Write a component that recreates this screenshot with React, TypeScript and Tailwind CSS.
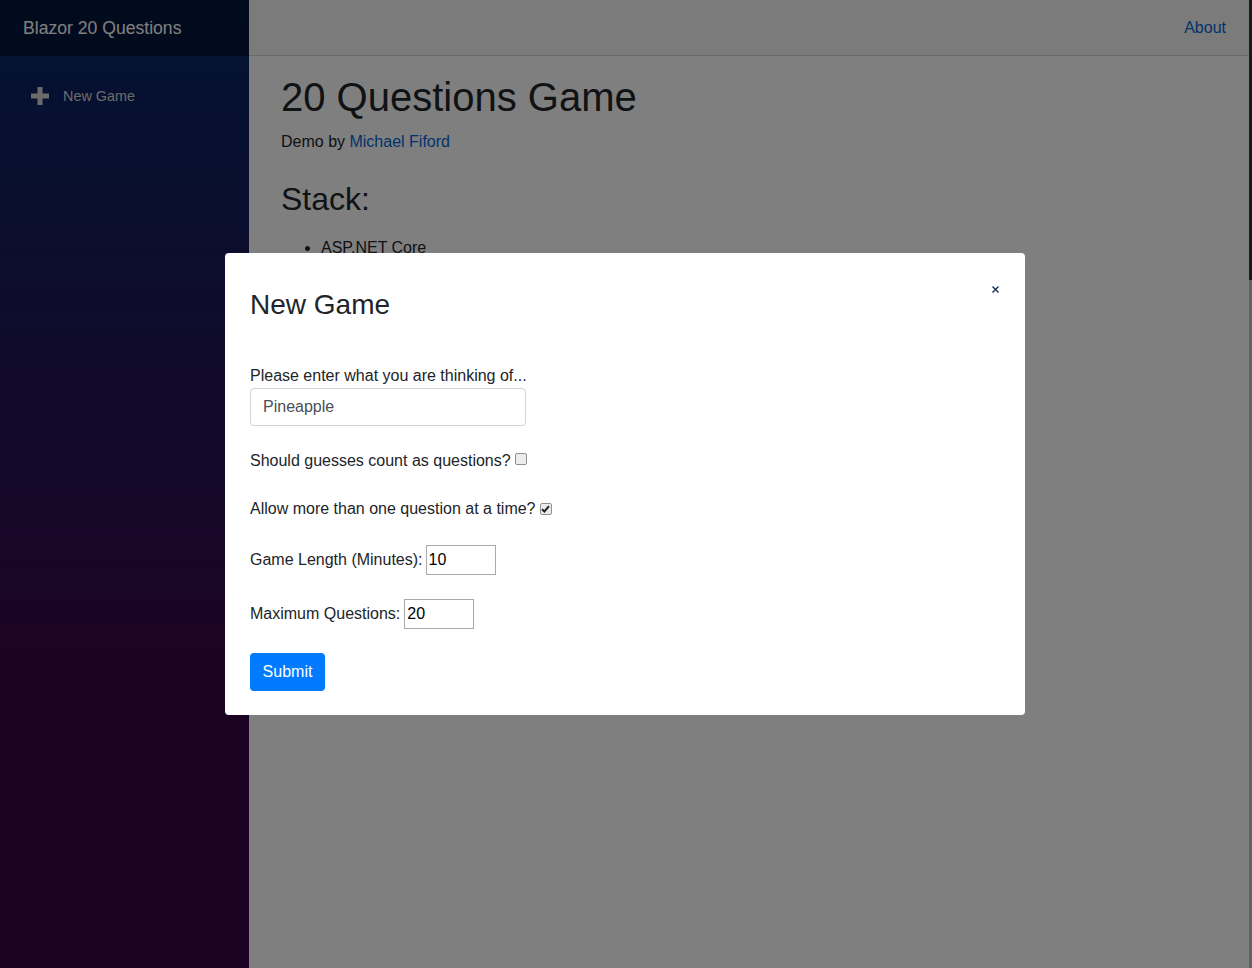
import React from 'react'

const font = { fontFamily: '"Liberation Sans", Arial, sans-serif' }

const PlusIcon = () => (
    <svg width="18" height="18" viewBox="0 0 18 18" className="shrink-0">
        <rect x="6.5" y="0" width="5" height="18" fill="#d7d7d7" />
        <rect x="0" y="6.5" width="18" height="5" fill="#d7d7d7" />
    </svg>
)

const FakeCheckbox = ({ checked }: { checked?: boolean }) => (
    <span className="inline-flex items-center justify-center w-[12px] h-[12px] ml-[4px] rounded-[2px] border border-[#8f8f8f] bg-[#ececec] align-[1px]">
        {checked && (
            <svg width="9" height="8" viewBox="0 0 9 8">
                <path d="M1 4.2 L3.4 6.5 L8 1.2" stroke="#222" strokeWidth="2" fill="none" />
            </svg>
        )}
    </span>
)

const Sidebar = () => {
    return (
        <div className='w-[249px] shrink-0 flex flex-col bg-[linear-gradient(180deg,rgb(5,39,103)_0%,#3a0647_70%)]'>
            <div className='h-[56px] flex items-center pl-[23px] bg-black/40'>
                <span className='text-white text-[17.6px]'>Blazor 20 Questions</span>
            </div>
            <ul className='px-4 pt-[17px]'>
                <li className='pb-2 text-[14.4px]'>
                    <a className='flex items-center h-12 pl-[15px] text-[#d7d7d7]'>
                        <span className='w-8 flex items-center -mt-[2px]'><PlusIcon /></span>
                        <span>New Game</span>
                    </a>
                </li>
            </ul>
        </div>
    )
}

const MainContent = () => {
    return (
        <div className='flex-1 flex flex-col bg-white text-[#212529]'>
            <div className='h-[56px] shrink-0 flex items-center justify-end pr-[23px] bg-[#f7f7f7] border-b border-[#d6d5d5]'>
                <a className='text-[#0366d6] text-[16px]'>About</a>
            </div>
            <div className='px-8 pt-[17px]'>
                <h1 className='text-[40px] leading-[1.2] mb-[9px]'>20 Questions Game</h1>
                <p className='text-[16px] leading-6'>Demo by <a className='text-[#0366d6]'>Michael Fiford</a></p>
                <h2 className='text-[32px] leading-[1.2] mt-[26px] mb-[18px]'>Stack:</h2>
                <ul className='list-disc pl-10 text-[16px] leading-6'>
                    <li>ASP.NET Core</li>
                </ul>
            </div>
        </div>
    )
}

const NewGameModal = () => {
    return (
        <div className='fixed inset-0 bg-black/50 flex items-center justify-center pr-[2px]'>
            <div className='w-[800px] bg-white rounded-[4px] px-[25px] pt-[25px] pb-[24px] text-[#212529] text-[16px]'>
                <div className='flex justify-between items-start'>
                    <h3 className='text-[28px] leading-[1.2] mt-[10px]'>New Game</h3>
                    <button className='mt-[8px] mr-[1px] w-[8px] h-[8px] flex items-center justify-center'>
                        <svg width="7" height="7" viewBox="0 0 7 7">
                            <path d="M0.5 0.5 L6.5 6.5 M6.5 0.5 L0.5 6.5" stroke="#0b2a55" strokeWidth="1.3" />
                        </svg>
                    </button>
                </div>
                <div className='mt-[43px]'>
                    <label className='block leading-6'>Please enter what you are thinking of...</label>
                    <div className='w-[276px] h-[38px] flex items-center px-3 border border-[#ced4da] rounded-[4px] text-[#495057]'>Pineapple</div>
                </div>
                <div className='mt-[23px] leading-6'>
                    Should guesses count as questions?<FakeCheckbox />
                </div>
                <div className='mt-[24px] leading-6'>
                    Allow more than one question at a time?<FakeCheckbox checked />
                </div>
                <div className='mt-[24px] flex items-center'>
                    <span>Game Length (Minutes):</span>
                    <div className='ml-[3px] w-[70px] h-[30px] flex items-center px-[2px] border border-[#a9a9a9] text-black'>10</div>
                </div>
                <div className='mt-[24px] flex items-center'>
                    <span>Maximum Questions:</span>
                    <div className='ml-[4px] w-[70px] h-[30px] flex items-center px-[2px] border border-[#a9a9a9] text-black'>20</div>
                </div>
                <button className='mt-[24px] w-[75px] h-[38px] bg-[#007bff] text-white rounded-[4px]'>Submit</button>
            </div>
        </div>
    )
}

const App = () => {
    return (
        <div className='h-[968px] flex overflow-hidden' style={font}>
            <Sidebar />
            <MainContent />
            <div className='w-[3px] flex flex-col'>
                <div className='h-[280px] bg-[#3a3230]'></div>
                <div className='flex-1 bg-[#c4c4c4]'></div>
            </div>
            <NewGameModal />
        </div>
    )
}

export default App
